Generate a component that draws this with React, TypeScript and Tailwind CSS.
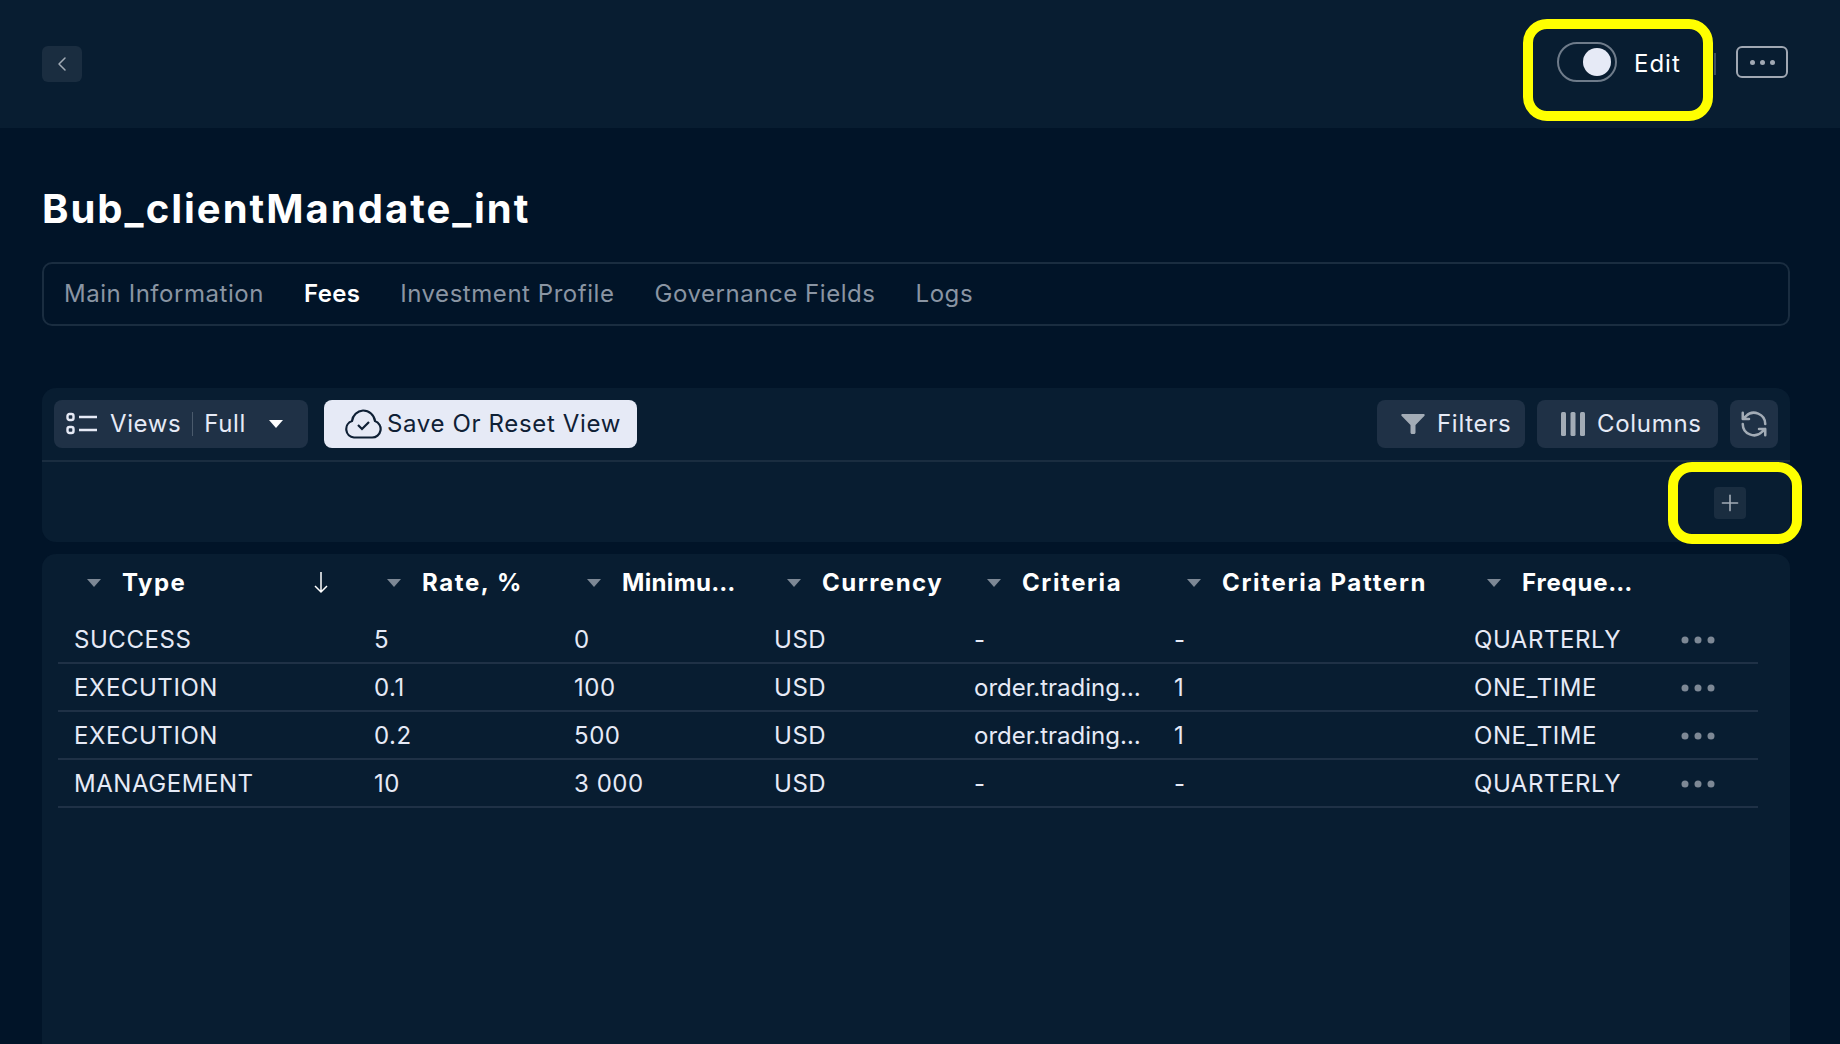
import { ChevronLeft, Plus } from 'lucide-react';

const font = "font-['Inter','Liberation_Sans',sans-serif]";

const tabs = ['Main Information', 'Fees', 'Investment Profile', 'Governance Fields', 'Logs'];

const columns = [
  { label: 'Type', sort: true, spacing: 'tracking-[1.5px]' },
  { label: 'Rate, %', spacing: 'tracking-[1.6px]' },
  { label: 'Minimu…', spacing: 'tracking-[0.35px]' },
  { label: 'Currency', spacing: 'tracking-[1.5px]' },
  { label: 'Criteria', spacing: 'tracking-[1.6px]' },
  { label: 'Criteria Pattern', spacing: 'tracking-[1.7px]' },
  { label: 'Freque…', spacing: 'tracking-[0.8px]' },
];

const rows = [
  ['SUCCESS', '5', '0', 'USD', '-', '-', 'QUARTERLY'],
  ['EXECUTION', '0.1', '100', 'USD', 'order.trading…', '1', 'ONE_TIME'],
  ['EXECUTION', '0.2', '500', 'USD', 'order.trading…', '1', 'ONE_TIME'],
  ['MANAGEMENT', '10', '3 000', 'USD', '-', '-', 'QUARTERLY'],
];

const grid = 'grid grid-cols-[300px_200px_200px_200px_200px_300px_200px_100px]';

function Caret({ className = '' }: { className?: string }) {
  return (
    <svg width="14" height="8" viewBox="0 0 14 8" className={className}>
      <path d="M0 0h14L7 8z" fill="currentColor" />
    </svg>
  );
}

function Dots() {
  return (
    <svg width="34" height="8" viewBox="0 0 34 8">
      <circle cx="4" cy="4" r="3.5" fill="#7d8895" />
      <circle cx="17" cy="4" r="3.5" fill="#7d8895" />
      <circle cx="30" cy="4" r="3.5" fill="#7d8895" />
    </svg>
  );
}

export default function App() {
  return (
    <div className={`${font} relative h-[1044px] w-[1840px] overflow-hidden bg-[#011428] text-white`}>
      <header className="flex h-32 items-start justify-between bg-[#081d31] pl-[42px] pr-[52px]">
        <button className="mt-[46px] flex h-9 w-10 items-center justify-center rounded-md bg-[#1a2d40] text-[#a3acb6]">
          <ChevronLeft size={24} strokeWidth={1.5} />
        </button>
        <div className="flex items-start">
          <div className="mt-[19px] flex h-[102px] w-[190px] items-center rounded-[24px] border-[10px] border-[#ffff00] pb-4 pl-6">
            <div className="flex h-10 w-[60px] items-center justify-end rounded-full border-2 border-[#6e7b8a] pr-1">
              <span className="h-7 w-7 rounded-full bg-[#e6eaf6]" />
            </div>
            <span className="ml-[17px] mt-[3px] text-2xl tracking-[1px]">Edit</span>
          </div>
          <span className="ml-px mt-[53px] h-[22px] w-0.5 bg-[#3f4e60]" />
          <button className="ml-5 mt-[46px] flex h-8 w-[52px] items-center justify-center gap-[5px] rounded-md border-2 border-[#a0a8b3]">
            <span className="h-[5px] w-[5px] rounded-full bg-[#a0a8b3]" />
            <span className="h-[5px] w-[5px] rounded-full bg-[#a0a8b3]" />
            <span className="h-[5px] w-[5px] rounded-full bg-[#a0a8b3]" />
          </button>
        </div>
      </header>

      <main className="pl-[42px] pr-[50px]">
        <h1 className="mt-[53px] text-[40px] font-bold leading-[56px] tracking-[2px]">Bub_clientMandate_int</h1>
        <nav className="mt-[25px] flex h-[64px] items-center gap-10 rounded-[10px] border-2 border-[#1a2d40] pl-5 text-2xl tracking-[0.55px] text-[#8a95a3]">
          {tabs.map(t => (
            <span key={t} className={t === 'Fees' ? 'font-semibold tracking-[0.3px] text-white' : ''}>{t}</span>
          ))}
        </nav>

        <section className="mt-[62px] h-[154px] rounded-[14px] bg-[#081d31]">
          <div className="flex h-[74px] items-start justify-between border-b-2 border-[#1a2d40] px-3 pt-3">
            <div className="flex gap-4">
              <button className="flex h-12 w-[254px] items-center rounded-lg bg-[#1f3146] pl-3 text-2xl tracking-[0.6px] text-[#e6eaf6]">
                <svg width="32" height="24" viewBox="0 0 32 24" fill="none" stroke="currentColor" strokeWidth="2.4">
                  <rect x="1.5" y="2" width="6" height="6" rx="2" />
                  <rect x="1.5" y="15" width="6" height="6" rx="2" />
                  <path d="M13 5h18M13 18h18" />
                </svg>
                <span className="ml-3">Views</span>
                <span className="mx-[11px] h-6 w-px bg-[#4a5a6c]" />
                <span>Full</span>
                <Caret className="ml-[23px] text-white" />
              </button>
              <button className="flex h-12 w-[313px] items-center gap-[5px] rounded-lg bg-[#e6eaf6] pl-5 text-2xl tracking-[0.65px] text-[#0f2035]">
                <svg width="38" height="30" viewBox="0 0 38 30" fill="none" stroke="currentColor" strokeWidth="2.2">
                  <path d="M10 28.5h18a8.5 8.5 0 0 0 3-16.5A12 12 0 0 0 19 1.5 12 12 0 0 0 8 12 8.5 8.5 0 0 0 10 28.5z" />
                  <path d="M14 16l4 4 7-7" />
                </svg>
                <span>Save Or Reset View</span>
              </button>
            </div>
            <div className="flex gap-3 text-2xl tracking-[0.7px] text-[#e6eaf6]">
              <button className="flex h-12 w-[148px] items-center rounded-lg bg-[#1f3146] pl-6">
                <svg width="24" height="20" viewBox="0 0 24 20" className="text-[#a3acb6]">
                  <path d="M1.5 0h21c1 0 1.6 1 1 1.8L14.5 11v7.5c0 .8-.6 1.5-1.5 1.5h-2c-.8 0-1.5-.7-1.5-1.5V11L.5 1.8C0 1 .5 0 1.5 0z" fill="currentColor" />
                </svg>
                <span className="ml-3">Filters</span>
              </button>
              <button className="flex h-12 w-[181px] items-center rounded-lg bg-[#1f3146] pl-6">
                <svg width="24" height="24" viewBox="0 0 24 24" className="text-[#a3acb6]">
                  <rect x="0" y="0" width="5" height="24" rx="1.5" fill="currentColor" />
                  <rect x="9.5" y="0" width="5" height="24" rx="1.5" fill="currentColor" />
                  <rect x="19" y="0" width="5" height="24" rx="1.5" fill="currentColor" />
                </svg>
                <span className="ml-3">Columns</span>
              </button>
              <button className="flex h-12 w-12 items-center justify-center rounded-lg bg-[#1f3146] text-[#a3acb6]">
                <svg width="30" height="30" viewBox="0 0 24 24" fill="none" stroke="currentColor" strokeWidth="2" strokeLinecap="round" strokeLinejoin="round">
                  <path d="M21 12a9 9 0 0 0-15.5-6.2L3 8M3 3v5h5" />
                  <path d="M3 12a9 9 0 0 0 15.5 6.2L21 16M21 21v-5h-5" />
                </svg>
              </button>
            </div>
          </div>
          <div className="flex justify-end pr-11 pt-[25px]">
            <button className="flex h-8 w-8 items-center justify-center rounded-sm bg-[#1a2d40] text-[#a3acb6]">
              <Plus size={26} strokeWidth={1.5} />
            </button>
          </div>
        </section>

        <section className="mt-3 h-[490px] rounded-t-[14px] bg-[#081d31] pl-4 pr-8">
          <div className={`${grid} h-[58px] items-center text-2xl font-bold`}>
            {columns.map(c => (
              <div key={c.label} className="flex items-center pl-[29px] pr-6">
                <Caret className="mr-[21px] shrink-0 text-[#7d8895]" />
                <span className={`whitespace-nowrap ${c.spacing}`}>{c.label}</span>
                {c.sort && (
                  <svg width="14" height="22" viewBox="0 0 14 22" fill="none" stroke="currentColor" strokeWidth="1.5" className="ml-auto mr-1.5">
                    <path d="M7 0v20M1 14l6 6 6-6" />
                  </svg>
                )}
              </div>
            ))}
          </div>
          <div className="pt-1">
            {rows.map((r, i) => (
              <div key={i} className={`${grid} h-12 items-center border-b-2 border-[#1f3146] pt-0.5 text-2xl tracking-[0.55px] text-[#e6eaf6]`}>
                {r.map((c, j) => (
                  <span key={j} className={`whitespace-nowrap pl-4 ${c.startsWith('order') ? 'tracking-normal' : ''}`}>{c}</span>
                ))}
                <span className="pl-[23px]"><Dots /></span>
              </div>
            ))}
          </div>
        </section>
      </main>

      <div className="absolute left-[1668px] top-[462px] h-[82px] w-[134px] rounded-[24px] border-[10px] border-[#ffff00]" />
    </div>
  );
}
